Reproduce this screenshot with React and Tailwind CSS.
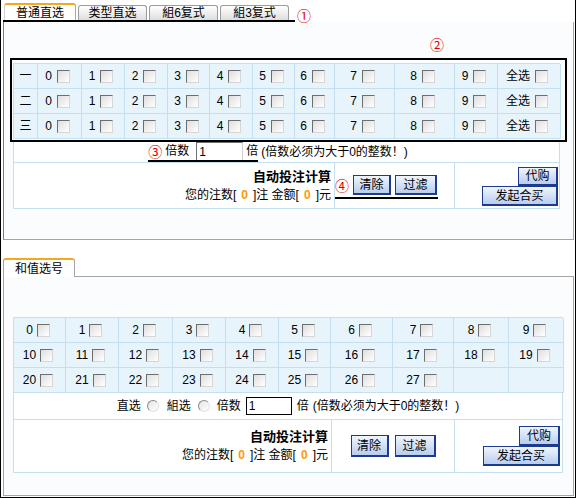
import React from "react";

const Check = () => (
  <span className="inline-block w-[13px] h-[13px] border border-t-[#6e6e6e] border-l-[#6e6e6e] border-r-[#d6d6d6] border-b-[#d6d6d6] bg-linear-to-br from-[#dedede] to-white" />
);

const Radio = () => (
  <span className="inline-block w-[12px] h-[12px] rounded-full border border-t-[#8a8a8a] border-l-[#8a8a8a] border-r-[#e2e2e2] border-b-[#e2e2e2] bg-linear-to-br from-[#e4e4e4] to-white" />
);

const Btn = ({ children, className }) => (
  <span
    className={`flex items-center justify-center border border-[#1c3a90] border-r-2 border-b-2 bg-linear-to-b from-[#f0f5fd] to-[#b9cdee] text-[12px] ${className}`}
  >
    {children}
  </span>
);

const Mark = ({ children, className = "" }) => (
  <span className={`text-[#e00000] text-[14px] font-['Noto_Sans_CJK_SC',sans-serif] ${className}`}>
    {children}
  </span>
);

const Zero = () => <span className="text-[#ff9900] font-bold px-[5px]">0</span>;

const Summary = () => (
  <div className="flex flex-col items-end justify-center pr-[3px] leading-[18px]">
    <span className="font-bold text-[13px]">自动投注计算</span>
    <span>
      您的注数[<Zero />]注 金额[<Zero />]元
    </span>
  </div>
);

const rows1 = ["一", "二", "三"];
const digits = [0, 1, 2, 3, 4, 5, 6, 7, 8, 9];
const sums = Array.from({ length: 28 }, (_, i) => i);

const cell =
  "h-[25px] flex items-center justify-center border-r border-b border-[#c3dff0] bg-[#e8f4fc]";

const Tab = ({ children, active }) =>
  active ? (
    <div className="w-[72px] h-[17px] flex items-center justify-center bg-white border-t-2 border-[#f5a81c] border-l border-l-[#d0d0d0] border-r border-r-[#a8a8a8] rounded-t-[3px]">
      {children}
    </div>
  ) : (
    <div className="w-[69px] h-[15px] flex items-center justify-center border border-b-0 border-[#9c9c9c] rounded-t-[3px] bg-linear-to-b from-white to-[#dedede]">
      {children}
    </div>
  );

export default function App() {
  return (
    <div className="w-[576px] h-[498px] bg-white border-l border-r border-b border-black pl-[2px] pt-[3px] font-['Liberation_Sans','Noto_Sans_CJK_SC',sans-serif] text-[12px] leading-none text-black">
      {/* tabs, first panel */}
      <div className="flex items-end h-[19px]">
        <div className="flex items-end gap-[2px] h-full border-b-2 border-black pl-[1px] pr-[6px]">
          <Tab active>普通直选</Tab>
          <Tab>类型直选</Tab>
          <Tab>組6复式</Tab>
          <Tab>組3复式</Tab>
        </div>
        <Mark className="ml-[2px]">①</Mark>
      </div>

      <div className="w-[571px] h-[218px] bg-[#fbfcfe] border-l border-l-[#7a7a7a] border-r border-b border-[#a4a4a4]">
        <div className="h-[36px] pl-[426px] pt-[15px]">
          <Mark>②</Mark>
        </div>

        <div className="mx-[6px] border-2 border-black pl-[1px] pt-[3px] pb-[1px]">
          <div className="grid w-[547px] grid-cols-[24px_44px_43px_43px_42px_43px_42px_40px_60px_60px_43px_63px] border-t border-l border-[#c3dff0]">
            {rows1.map((r) => (
              <React.Fragment key={r}>
                <div className={cell}>{r}</div>
                {digits.map((d) => (
                  <div key={d} className={`${cell} pr-[4px]`}>
                    <span>{d}</span>
                    <span className="ml-[5px] flex">
                      <Check />
                    </span>
                  </div>
                ))}
                <div className={`${cell} pr-[4px]`}>
                  <span>全选</span>
                  <span className="ml-[5px] flex">
                    <Check />
                  </span>
                </div>
              </React.Fragment>
            ))}
          </div>
        </div>

        <div className="ml-[9px] w-[547px]">
          <div className="h-[21px] flex items-start justify-center pr-[17px] bg-white border-l border-r border-b border-[#c3dff0]">
            <div className="flex items-center h-[20px] border-b-2 border-black">
              <Mark className="mr-[3px]">③</Mark>
              <span>倍数</span>
              <span className="ml-[7px] w-[47px] h-[18px] pl-[2px] flex items-center bg-white border border-t-[#707070] border-l-[#707070] border-r-[#d0d0d0] border-b-0">
                1
              </span>
              <span className="ml-[3px]">倍</span>
            </div>
            <span className="ml-[3px] h-[20px] flex items-center">(倍数必须为大于0的整数！)</span>
          </div>

          <div className="h-[46px] flex bg-white border-l border-r border-b border-[#c3dff0]">
            <div className="w-[321px] border-r border-[#c3dff0] flex justify-end">
              <Summary />
            </div>
            <div className="w-[120px] border-r border-[#c3dff0] flex items-center pt-[3px]">
              <div className="flex items-center gap-[4px] border-b-2 border-black pb-[2px] pr-[1px]">
                <Mark>④</Mark>
                <Btn className="w-[38px] h-[20px]">清除</Btn>
                <Btn className="w-[42px] h-[20px]">过滤</Btn>
              </div>
            </div>
            <div className="flex-1 flex flex-col items-end justify-center pr-[1px] pt-[2px]">
              <Btn className="w-[40px] h-[19px]">代购</Btn>
              <Btn className="w-[76px] h-[20px]">发起合买</Btn>
            </div>
          </div>
        </div>
      </div>

      {/* second panel */}
      <div className="mt-[18px] flex h-[19px]">
        <div className="w-[72px] h-full flex items-center justify-center bg-white border-t-2 border-[#f5a81c] border-l border-l-[#a4a4a4] border-r border-r-[#a4a4a4] rounded-t-[3px]">
          和值选号
        </div>
        <div className="w-[499px] border-b border-[#a4a4a4]" />
      </div>

      <div className="w-[571px] h-[219px] bg-[#fbfcfe] border-l border-r border-b border-[#a4a4a4] pt-[40px]">
        <div className="ml-[9px] w-[550px]">
          <div className="grid grid-cols-[52px_53px_54px_53px_53px_52px_62px_61px_55px_55px] border-t border-l border-[#c3dff0]">
            {sums.map((n) => (
              <div key={n} className={`${cell} pr-[3px]`}>
                <span>{n}</span>
                <span className="ml-[4px] flex">
                  <Check />
                </span>
              </div>
            ))}
            <div className={cell} />
            <div className={cell} />
          </div>

          <div className="h-[27px] flex items-center justify-center bg-white border-l border-r border-b border-[#c3dff0]">
            <span>直选</span>
            <span className="ml-[6px] flex">
              <Radio />
            </span>
            <span className="ml-[8px]">組选</span>
            <span className="ml-[7px] flex">
              <Radio />
            </span>
            <span className="ml-[7px]">倍数</span>
            <span className="ml-[5px] w-[46px] h-[18px] pl-[2px] flex items-center bg-white border border-black">
              1
            </span>
            <span className="ml-[5px]">倍</span>
            <span className="ml-[4px]">(倍数必须为大于0的整数！)</span>
          </div>

          <div className="h-[53px] flex bg-white border-l border-r border-b border-[#c3dff0]">
            <div className="w-[318px] border-r border-[#c3dff0] flex justify-end">
              <Summary />
            </div>
            <div className="w-[123px] border-r border-[#c3dff0] flex items-center justify-center gap-[6px]">
              <Btn className="w-[38px] h-[22px]">清除</Btn>
              <Btn className="w-[41px] h-[22px]">过滤</Btn>
            </div>
            <div className="flex-1 flex flex-col items-end justify-center pr-[2px]">
              <Btn className="w-[41px] h-[20px]">代购</Btn>
              <Btn className="w-[77px] h-[20px]">发起合买</Btn>
            </div>
          </div>
        </div>
      </div>
    </div>
  );
}
